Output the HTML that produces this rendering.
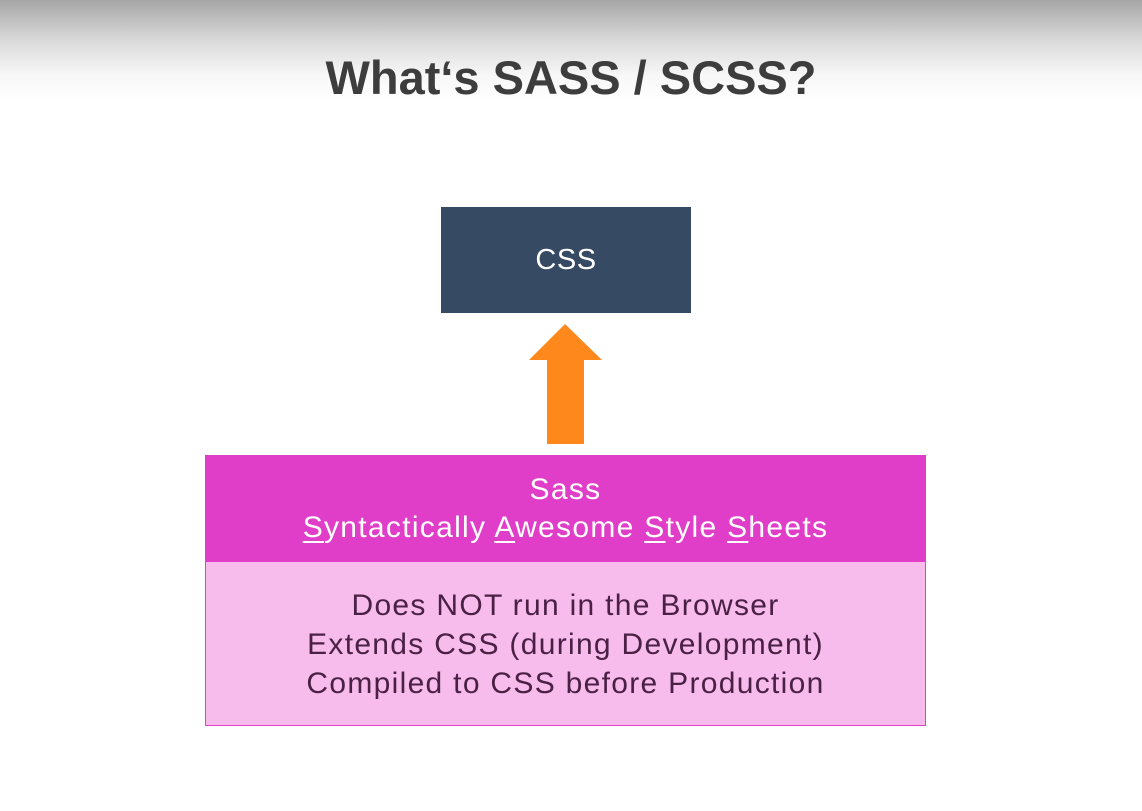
<!DOCTYPE html>
<html><head><style>
body{margin:0;width:1142px;height:811px;overflow:hidden;font-family:"Liberation Sans",sans-serif;background:linear-gradient(#a6a6a6 0px,#d9d9d9 40px,#f7f7f7 75px,#fff 100px);position:relative}
.t{position:absolute;left:0;width:1142px;text-align:center;top:50px;font-size:47px;font-weight:bold;color:#3d3d3d;letter-spacing:0px}
.css{position:absolute;left:441px;top:207px;width:250px;height:106px;background:#374a63;color:#fff;font-size:29px;display:flex;align-items:center;justify-content:center;letter-spacing:0.5px}
.box{position:absolute;left:205px;top:455px;width:719px;height:269px;border:1px solid #e03ec8;background:#f7bcec}
.hd{height:106px;background:#e03ec8;color:#fff;text-align:center;font-size:30px;line-height:38px;padding-top:15px;box-sizing:border-box;letter-spacing:1.3px}
.bd{text-align:center;font-size:30px;line-height:39px;color:#4a2145;padding-top:130px;position:absolute;top:0;left:0;right:0;letter-spacing:1.3px}
u{text-decoration-thickness:2px;text-underline-offset:4px}
</style></head><body>
<div class="t">What‘s SASS / SCSS?</div>
<div class="css">CSS</div>
<svg style="position:absolute;left:0;top:0" width="1142" height="811"><polygon points="565,324 602,360 584,360 584,444 547,444 547,360 529,360" fill="#fe881b"/></svg>
<div class="box"><div class="hd">Sass<br><u>S</u>yntactically <u>A</u>wesome <u>S</u>tyle <u>S</u>heets</div>
<div class="bd">Does NOT run in the Browser<br>Extends CSS (during Development)<br>Compiled to CSS before Production</div></div>
</body></html>
